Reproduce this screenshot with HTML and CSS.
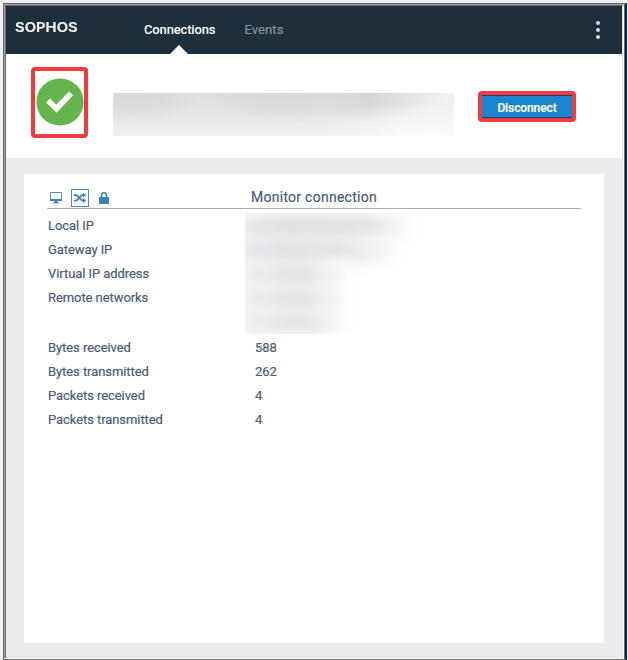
FILE: index.html
```html
<!DOCTYPE html>
<html lang="en">
<head>
<meta charset="utf-8">
<title>Sophos Connect</title>
<link rel="stylesheet" href="styles.css">
</head>
<body>
<div class="window">
  <div class="app">
    <header class="topbar">
      <div class="logo"><span>SOPHOS</span></div>
      <nav class="tabs">
        <a class="tab active">Connections</a>
        <a class="tab">Events</a>
      </nav>
      <div class="menu"><i></i><i></i><i></i></div>
    </header>
    <section class="status">
      <div class="status-icon">
        <svg width="48" height="48" viewBox="0 0 48 48"><circle cx="24" cy="24" r="23.6" fill="#65b54f"/><path d="M12.1 22.6 20.5 30.8 35.1 15.4" fill="none" stroke="#fff" stroke-width="5.6"/></svg>
      </div>
      <div class="redacted-name"></div>
      <button class="disconnect"><span>Disconnect</span></button>
    </section>
    <main class="content">
      <div class="panel">
        <div class="panel-head">
          <div class="icons">
            <span class="icon"><svg width="14" height="14" viewBox="0 0 14 14"><path d="M1.5 1.5h11v8h-11z" fill="#fff" stroke="#5795bf"/><path d="M1 8h12v2H1zM5.5 10h3v1.3h1.5v1H4v-1h1.5z" fill="#3983b6"/></svg></span>
            <span class="icon selected"><svg width="14" height="14" viewBox="0 0 14 14"><path d="M1 4h1.8C5.6 4 7 9.6 9.8 9.6H11M1 9.6h1.8C5.6 9.6 7 4 9.8 4H11" fill="none" stroke="#3983b6" stroke-width="1.9"/><path d="M10 1.7 13.3 4 10 6.3zM10 7.3l3.3 2.3L10 11.9z" fill="#3983b6"/></svg></span>
            <span class="icon"><svg width="14" height="14" viewBox="0 0 14 14"><path d="M4.5 7V4.2a2.5 2.5 0 0 1 5 0V7" fill="none" stroke="#3983b6" stroke-width="1.6"/><rect x="2" y="6" width="10" height="7" rx=".5" fill="#3983b6"/></svg></span>
          </div>
          <h1>Monitor connection</h1>
        </div>
        <div class="addresses">
          <dl class="rows">
            <dt>Local IP</dt>
            <dt>Gateway IP</dt>
            <dt>Virtual IP address</dt>
            <dt>Remote networks</dt>
          </dl>
          <div class="redacted-values">
            <i class="smudge wide"></i><i class="smudge wide"></i><i class="smudge"></i><i class="smudge"></i><i class="smudge"></i>
          </div>
        </div>
        <dl class="stats">
          <dt>Bytes received</dt><dd>588</dd>
          <dt>Bytes transmitted</dt><dd>262</dd>
          <dt>Packets received</dt><dd>4</dd>
          <dt>Packets transmitted</dt><dd>4</dd>
        </dl>
      </div>
    </main>
  </div>
</div>
</body>
</html>
```
FILE: styles.css
```css
* { box-sizing: border-box; }
body {
  margin: 0;
  padding: 3px 1px 0 3px;
  height: 660px;
  overflow: hidden;
  background: #f0f0f4;
  font: 400 13px/24px Roboto, "Liberation Sans", sans-serif;
  color: #4a5d78;
  -webkit-text-stroke: .2px;
}
.window {
  height: 657px;
  border: 1px solid #696969;
  border-right: 2px solid #03264d;
  box-shadow: inset -1px 0 #696969;
  padding: 0 1px 0 0;
}
.app {
  height: 655px;
  border: 1px solid;
  border-color: #a0a0a0 #fff #fff #a0a0a0;
  display: flex;
  flex-direction: column;
  box-shadow: inset 1px 1px #696969, inset -1px -1px #e3e3e3;
  padding: 1px;
}
.topbar {
  height: 48px;
  flex: none;
  background: #1d2f3c;
  display: flex;
}
.logo {
  width: 138px;
  padding-left: 9px;
  color: #f3f4f0;
  font: 600 13px/42px Inter, "Liberation Sans", sans-serif;
}
.logo span {
  display: inline-block;
  transform: scaleX(1.14);
  transform-origin: left;
}
.tabs { display: flex; gap: 30px; line-height: 47px; font-weight: 500; letter-spacing: -.15px; -webkit-text-stroke: 0; }
.tab { color: #87929d; position: relative; }
.tab:not(.active) { font-weight: 400; letter-spacing: .1px; margin-left: -1px; -webkit-text-stroke: .2px; }
.tab.active { color: #fff; }
.tab.active::after {
  content: "";
  position: absolute;
  bottom: 0;
  left: calc(50% - 10px);
  border: solid transparent;
  border-width: 0 9px 9px;
  border-bottom-color: #fff;
}
.menu {
  margin: 15px 22px 0 auto;
  display: flex;
  flex-direction: column;
  gap: 3px;
}
.menu i { width: 4px; height: 4px; border-radius: 50%; background: #d7d9da; }
.status {
  height: 104px;
  flex: none;
  background: #fff;
  display: flex;
  align-items: flex-start;
  padding-left: 25px;
}
.status-icon {
  width: 57px;
  height: 71px;
  margin-top: 13px;
  padding-bottom: 2px;
  border: 4px solid #f23b3e;
  border-radius: 4px;
  display: flex;
  align-items: center;
  justify-content: center;
}
.status-icon svg { flex: none; }
.redacted-name {
  width: 341px;
  height: 43px;
  margin: 39px 24px 0 25px;
  background:
    linear-gradient(90deg, transparent 75%, rgba(255,255,255,.55) 100%),
    radial-gradient(ellipse 100px 38px at 88% 110%, rgba(255,255,255,.8), rgba(255,255,255,0)),
    radial-gradient(ellipse 65px 32px at 22px 0, #d7d7d7, rgba(215,215,215,0)),
    radial-gradient(ellipse 80px 32px at 170px 0, #d6d6d6, rgba(214,214,214,0)),
    radial-gradient(ellipse 65px 30px at 260px 0, #d4d4d4, rgba(212,212,212,0)),
    linear-gradient(#dedfdf, #e5e6e6 45%, #f0f0f0);
}
.disconnect {
  width: 98px;
  height: 31px;
  margin-top: 37px;
  padding: 3px 0 0;
  border: 4px solid #f23b3e;
  border-radius: 4px;
  background: #1a86ce;
  box-shadow: inset 0 1px #153f70, inset 0 -1px #153f70;
  color: #fff;
  font: 500 12px/20px Roboto, "Liberation Sans", sans-serif;
  letter-spacing: -.1px;
}
.content { flex: 1; background: #ebebeb; padding: 16px 18px 14px; }
.panel { height: 469px; background: #fff; padding: 13px 23px 0; }
.panel-head {
  display: flex;
  height: 22px;
  border-bottom: 1px solid #aaa;
}
.icons { width: 204px; display: flex; gap: 6px; }
.icon {
  width: 18px;
  height: 18px;
  margin-top: 2px;
  display: flex;
  align-items: center;
  justify-content: center;
}
.icon.selected { border: 1px solid #4d85c5; }
.icon svg { flex: none; }
h1 { margin: 0; font-size: 14px; line-height: 20px; font-weight: 400; letter-spacing: .26px; }
dl, dd { margin: 0; }
dt { letter-spacing: -.07px; }
.addresses { display: flex; height: 127px; padding: 5px 0 0 1px; }
.rows { width: 197px; }
.redacted-values {
  width: 182px;
  height: 122px;
  margin-top: -2px;
  padding-top: 2px;
  overflow: hidden;
}
.smudge {
  display: block;
  width: 110px;
  height: 24px;
  margin-left: -5px;
  background: linear-gradient(90deg, #eceef0, #e3e4e6 50px 70px, #fff);
  filter: blur(7px);
}
.smudge.wide { width: 175px; background: linear-gradient(90deg, #e6e8ea, #dfe0e4 45px, #e2e3e5 130px, #fff); }
.smudge.wide + .wide { width: 162px; background: linear-gradient(90deg, #e6e8ea, #e0e1e5 45px, #e4e5e7 110px, #fff); }
.stats {
  display: grid;
  grid-template-columns: 207px 1fr;
  padding-left: 1px;
}
```
